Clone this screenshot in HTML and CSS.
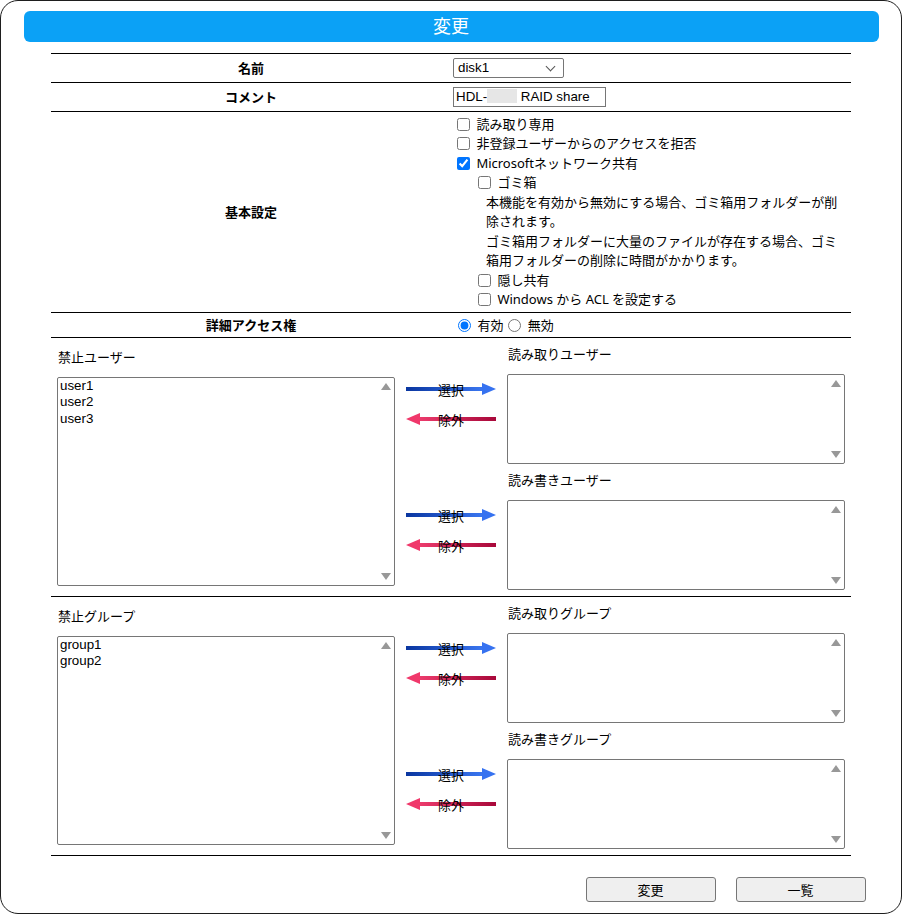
FILE: index.html
```html
<!DOCTYPE html>
<html lang="ja">
<head>
    <meta charset="UTF-8">
    <title>共有フォルダー 変更</title>
    <link rel="stylesheet" href="styles.css">
</head>
<body>
    <svg class="defs" width="0" height="0">
        <defs>
            <linearGradient id="gBlue" x1="0" x2="1" y1="0" y2="0">
                <stop offset="0" stop-color="#0a36a0"/>
                <stop offset="1" stop-color="#3a76f0"/>
            </linearGradient>
            <linearGradient id="gRed" x1="0" x2="1" y1="0" y2="0">
                <stop offset="0" stop-color="#ec3b6c"/>
                <stop offset="1" stop-color="#a8083a"/>
            </linearGradient>
        </defs>
    </svg>

    <div class="frame">
        <h1 class="title">変更</h1>

        <div class="form">
            <div class="row">
                <div class="row-label">名前</div>
                <div class="row-value">
                    <div class="select">disk1</div>
                </div>
            </div>
            <div class="row">
                <div class="row-label">コメント</div>
                <div class="row-value">
                    <div class="textbox">HDL-<span class="redact"></span> RAID share</div>
                </div>
            </div>
            <div class="row">
                <div class="row-label">基本設定</div>
                <div class="row-value opts">
                    <label class="opt"><input type="checkbox"> 読み取り専用</label>
                    <label class="opt"><input type="checkbox"> 非登録ユーザーからのアクセスを拒否</label>
                    <label class="opt"><input type="checkbox" checked> Microsoftネットワーク共有</label>
                    <div class="sub">
                        <label class="opt"><input type="checkbox"> ゴミ箱</label>
                        <p class="note">本機能を有効から無効にする場合、ゴミ箱用フォルダーが削除されます。</p>
                        <p class="note">ゴミ箱用フォルダーに大量のファイルが存在する場合、ゴミ箱用フォルダーの削除に時間がかかります。</p>
                        <label class="opt"><input type="checkbox"> 隠し共有</label>
                        <label class="opt"><input type="checkbox"> Windows から ACL を設定する</label>
                    </div>
                </div>
            </div>
            <div class="row row-short">
                <div class="row-label">詳細アクセス権</div>
                <div class="row-value">
                    <label class="radio"><input type="radio" name="acl" checked> 有効</label>
                    <label class="radio"><input type="radio" name="acl"> 無効</label>
                </div>
            </div>

            <!-- users -->
            <div class="access">
                <div class="pick-from">
                    <div class="pick-label">禁止ユーザー</div>
                    <div class="listbox tall">
                        <div>user1</div>
                        <div>user2</div>
                        <div>user3</div>
                    </div>
                </div>
                <div class="pick-to">
                    <div class="pair">
                        <div class="moves">
                            <div class="move">
                                <svg class="arrow" width="90" height="12" viewBox="0 0 90 12"><rect x="0" y="4" width="77" height="4" fill="url(#gBlue)"/><polygon points="76,0 90,6 76,12" fill="#3672f0"/></svg>
                                <span>選択</span>
                            </div>
                            <div class="move">
                                <svg class="arrow" width="90" height="12" viewBox="0 0 90 12"><rect x="13" y="4" width="77" height="4" fill="url(#gRed)"/><polygon points="14,0 0,6 14,12" fill="#f0386b"/></svg>
                                <span>除外</span>
                            </div>
                        </div>
                        <div class="target">
                            <div class="pick-label">読み取りユーザー</div>
                            <div class="listbox short"></div>
                        </div>
                    </div>
                    <div class="pair">
                        <div class="moves">
                            <div class="move">
                                <svg class="arrow" width="90" height="12" viewBox="0 0 90 12"><rect x="0" y="4" width="77" height="4" fill="url(#gBlue)"/><polygon points="76,0 90,6 76,12" fill="#3672f0"/></svg>
                                <span>選択</span>
                            </div>
                            <div class="move">
                                <svg class="arrow" width="90" height="12" viewBox="0 0 90 12"><rect x="13" y="4" width="77" height="4" fill="url(#gRed)"/><polygon points="14,0 0,6 14,12" fill="#f0386b"/></svg>
                                <span>除外</span>
                            </div>
                        </div>
                        <div class="target">
                            <div class="pick-label">読み書きユーザー</div>
                            <div class="listbox short"></div>
                        </div>
                    </div>
                </div>
            </div>

            <!-- groups -->
            <div class="access">
                <div class="pick-from">
                    <div class="pick-label">禁止グループ</div>
                    <div class="listbox tall">
                        <div>group1</div>
                        <div>group2</div>
                    </div>
                </div>
                <div class="pick-to">
                    <div class="pair">
                        <div class="moves">
                            <div class="move">
                                <svg class="arrow" width="90" height="12" viewBox="0 0 90 12"><rect x="0" y="4" width="77" height="4" fill="url(#gBlue)"/><polygon points="76,0 90,6 76,12" fill="#3672f0"/></svg>
                                <span>選択</span>
                            </div>
                            <div class="move">
                                <svg class="arrow" width="90" height="12" viewBox="0 0 90 12"><rect x="13" y="4" width="77" height="4" fill="url(#gRed)"/><polygon points="14,0 0,6 14,12" fill="#f0386b"/></svg>
                                <span>除外</span>
                            </div>
                        </div>
                        <div class="target">
                            <div class="pick-label">読み取りグループ</div>
                            <div class="listbox short"></div>
                        </div>
                    </div>
                    <div class="pair">
                        <div class="moves">
                            <div class="move">
                                <svg class="arrow" width="90" height="12" viewBox="0 0 90 12"><rect x="0" y="4" width="77" height="4" fill="url(#gBlue)"/><polygon points="76,0 90,6 76,12" fill="#3672f0"/></svg>
                                <span>選択</span>
                            </div>
                            <div class="move">
                                <svg class="arrow" width="90" height="12" viewBox="0 0 90 12"><rect x="13" y="4" width="77" height="4" fill="url(#gRed)"/><polygon points="14,0 0,6 14,12" fill="#f0386b"/></svg>
                                <span>除外</span>
                            </div>
                        </div>
                        <div class="target">
                            <div class="pick-label">読み書きグループ</div>
                            <div class="listbox short"></div>
                        </div>
                    </div>
                </div>
            </div>
        </div>

        <div class="actions">
            <button class="btn">変更</button>
            <button class="btn">一覧</button>
        </div>
    </div>
</body>
</html>
```

FILE: styles.css
```css
* {
    box-sizing: border-box;
}
body {
    margin: 0;
    background: #fff;
    color: #000;
    font-family: "Noto Sans", "Noto Sans CJK JP", sans-serif;
    font-size: 13px;
}
.defs {
    position: absolute;
}
.frame {
    width: 902px;
    height: 914px;
    border: 1.5px solid #1e1e1e;
    border-radius: 18px;
    padding: 9.5px 22.5px 0;
}
.title {
    margin: 0;
    height: 31px;
    line-height: 31px;
    background: #0ba1f6;
    border-radius: 6px;
    color: #fff;
    font-size: 18px;
    font-weight: normal;
    text-align: center;
}
.form {
    width: 800px;
    margin: 11px auto 0;
}
.row {
    display: flex;
    border-top: 1px solid #000;
}
.row-label {
    width: 400px;
    display: flex;
    align-items: center;
    justify-content: center;
    font-weight: bold;
}
.row-value {
    flex: 1;
    min-height: 28px;
    padding-left: 2px;
    display: flex;
    align-items: center;
}
.row-short .row-value {
    min-height: 24px;
}

/* name / comment */
.select {
    position: relative;
    width: 111px;
    height: 20px;
    border: 1px solid #767676;
    border-radius: 2px;
    padding: 0 4px;
    font-family: "Liberation Sans", Arial, sans-serif;
    font-size: 13.33px;
    line-height: 18px;
}
.select::after {
    content: "";
    position: absolute;
    right: 9px;
    top: 4px;
    width: 6px;
    height: 6px;
    border-right: 1px solid #555;
    border-bottom: 1px solid #555;
    transform: rotate(45deg);
}
.textbox {
    width: 153px;
    height: 20px;
    border: 1px solid #767676;
    padding: 0 2px;
    font-family: "Liberation Sans", Arial, sans-serif;
    font-size: 13.33px;
    line-height: 18px;
    white-space: nowrap;
}
.redact {
    display: inline-block;
    width: 30px;
    height: 14px;
    vertical-align: -2px;
    background: #e6e6e6;
    filter: blur(0.6px);
}

/* basic settings */
.opts {
    flex-direction: column;
    align-items: flex-start;
    padding: 3px 0 2px 2px;
}
.opt {
    display: block;
    line-height: 19.5px;
    white-space: nowrap;
}
.opt input {
    width: 13px;
    height: 13px;
    margin: 0 3px 0 4px;
    vertical-align: -2px;
}
.sub {
    margin-left: 21px;
}
.note {
    margin: 0 0 0 12px;
    width: 358px;
    line-height: 19.5px;
}
.radio input {
    width: 13px;
    height: 13px;
    margin: 0 3px 0 5px;
    vertical-align: -2px;
}

/* access lists */
.access {
    display: flex;
    border-top: 1px solid #000;
    padding: 0 6px;
}
.access:last-child {
    border-bottom: 1px solid #000;
}
.pick-from {
    width: 338px;
    padding: 9px 0 10px;
}
.pick-label {
    line-height: 20px;
    padding-left: 1px;
}
.listbox {
    position: relative;
    margin-top: 10px;
    border: 1px solid #767676;
    border-radius: 2px;
    padding: 0 2px;
    font-family: "Liberation Sans", Arial, sans-serif;
    font-size: 13.33px;
    line-height: 16.5px;
}
.listbox.tall {
    height: 209px;
}
.listbox.short {
    height: 90px;
}
.listbox::before,
.listbox::after {
    content: "";
    position: absolute;
    right: 3px;
    border-left: 5px solid transparent;
    border-right: 5px solid transparent;
}
.listbox::before {
    top: 5px;
    border-bottom: 7px solid #989898;
}
.listbox::after {
    bottom: 5px;
    border-top: 7px solid #989898;
}
.pick-to {
    padding: 6px 0;
}
.pair {
    display: flex;
}
.pair + .pair {
    margin-top: 6px;
}
.moves {
    width: 112px;
    padding: 35px 0 0 11px;
}
.move {
    position: relative;
    width: 90px;
    height: 20px;
    display: flex;
    align-items: center;
    justify-content: center;
    line-height: 20px;
}
.move + .move {
    margin-top: 10px;
}
.move .arrow {
    position: absolute;
    left: 0;
    top: 4px;
}
.move span {
    position: relative;
    padding-top: 2px;
}
.target {
    width: 338px;
}

/* buttons */
.actions {
    display: flex;
    justify-content: flex-end;
    gap: 20px;
    margin-top: 21px;
    padding-right: 13px;
}
.btn {
    width: 130px;
    height: 25px;
    background: #efefef;
    border: 1px solid #767676;
    border-radius: 3px;
    font-family: "Noto Sans CJK JP", sans-serif;
    font-size: 13px;
    color: #000;
}
```
